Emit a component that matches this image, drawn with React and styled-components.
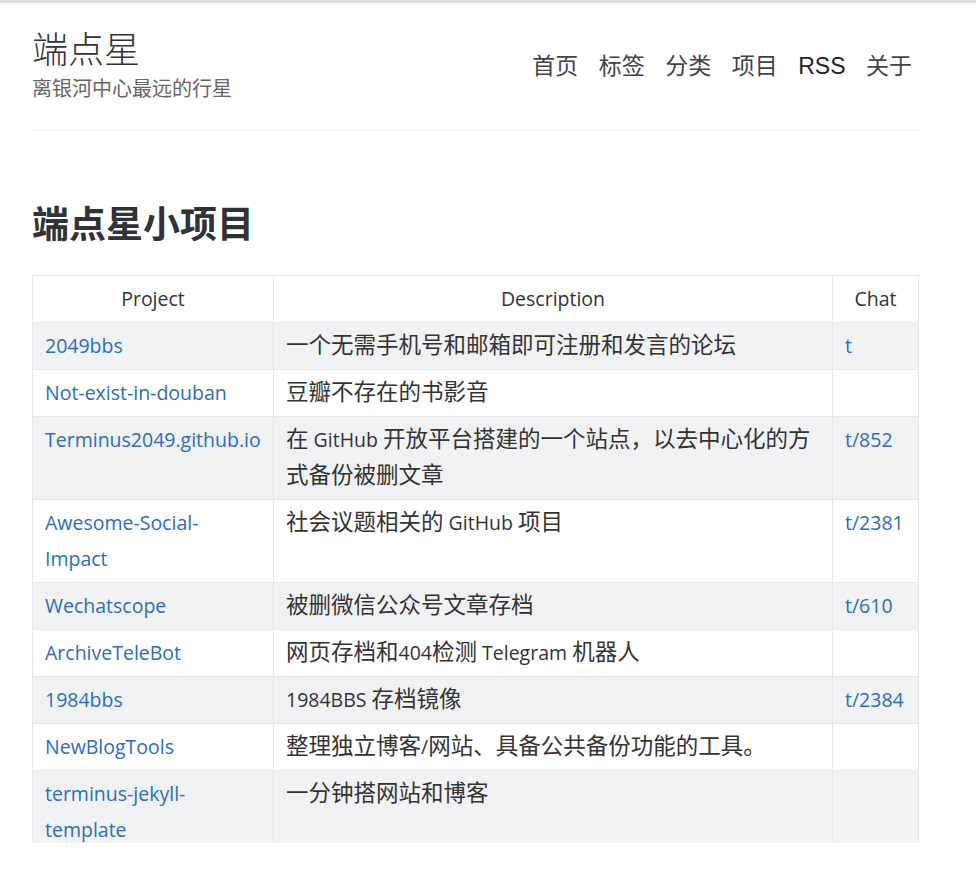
import React from "react";
import styled, { createGlobalStyle } from "styled-components";

const GlobalStyle = createGlobalStyle`
  html, body {
    margin: 0;
    padding: 0;
    background: #fff;
  }
  body {
    font-family: "Open Sans", "Noto Sans CJK SC", sans-serif;
    color: #333;
  }
`;

const Page = styled.div`
  border-top: 3px solid #dedee3;
  height: 840px;
  overflow: hidden;
`;

const Container = styled.div`
  width: 886px;
  margin-left: 32px;
`;

const Header = styled.header`
  display: flex;
  justify-content: space-between;
  align-items: center;
  padding: 22px 0 27px;
  border-bottom: 1px solid #eeeeee;
`;

const Brand = styled.div`
  display: flex;
  flex-direction: column;
`;

const SiteTitle = styled.a`
  font-family: "Noto Sans CJK SC", sans-serif;
  font-size: 36px;
  font-weight: 300;
  line-height: 44px;
  color: #333;
  text-decoration: none;
`;

const SiteTagline = styled.div`
  font-family: "Noto Sans CJK SC", sans-serif;
  font-size: 20px;
  line-height: 30px;
  margin-top: 4px;
  color: #666;
`;

const Nav = styled.nav`
  display: flex;
  align-items: baseline;
  gap: 20.5px;
  margin: 4px 6px 0 0;
`;

const NavLink = styled.a`
  font-family: "Liberation Sans", "Noto Sans CJK SC", sans-serif;
  font-size: 23px;
  line-height: 32px;
  color: ${(p) => (p.$latin ? "#222" : "#444")};
  text-decoration: none;
`;

const Title = styled.h1`
  font-family: "Noto Sans CJK SC", sans-serif;
  font-size: 37px;
  font-weight: 700;
  color: #2f3237;
  margin: 66px 0 28px;
  line-height: 50px;
`;

const Table = styled.table`
  width: 100%;
  border-collapse: collapse;
  table-layout: fixed;
  font-family: "Open Sans", "Noto Sans CJK SC", sans-serif;
  font-size: 19.5px;
  line-height: 36px;
`;

const Col = styled.col`
  width: ${(p) => p.$w}px;
`;

const Th = styled.th`
  font-weight: 400;
  text-align: center;
  padding: 5px 12px;
  border: 1px solid #e5e7ea;
`;

const Row = styled.tr`
  background: ${(p) => (p.$striped ? "#f1f2f4" : "#fff")};
`;

const Td = styled.td`
  padding: 5px 11px 5px 12px;
  border: 1px solid #e5e7ea;
  vertical-align: top;
  word-wrap: break-word;
`;

const Han = styled.span`
  font-family: "Noto Sans CJK SC", sans-serif;
  font-size: 22.5px;
  line-height: 20px;
`;

const Link = styled.a`
  color: #2b6cc4;
  text-decoration: none;
`;

// CJK runs are set a bit larger than the latin text, as in the original page
function Mixed({ text }) {
  const parts = text.split(/([\u3000-\u9fff\uff00-\uffef]+)/).filter(Boolean);
  return parts.map((part, i) =>
    /[\u3000-\u9fff\uff00-\uffef]/.test(part) ? (
      <Han key={i}>{part}</Han>
    ) : (
      <React.Fragment key={i}>{part}</React.Fragment>
    )
  );
}

const projects = [
  { name: ["2049bbs"], desc: "一个无需手机号和邮箱即可注册和发言的论坛", chat: "t" },
  { name: ["Not-exist-in-douban"], desc: "豆瓣不存在的书影音", chat: "" },
  {
    name: ["Terminus2049.github.io"],
    desc: "在 GitHub 开放平台搭建的一个站点，以去中心化的方式备份被删文章",
    chat: "t/852",
  },
  { name: ["Awesome-Social-", "Impact"], desc: "社会议题相关的 GitHub 项目", chat: "t/2381" },
  { name: ["Wechatscope"], desc: "被删微信公众号文章存档", chat: "t/610" },
  { name: ["ArchiveTeleBot"], desc: "网页存档和404检测 Telegram 机器人", chat: "" },
  { name: ["1984bbs"], desc: "1984BBS 存档镜像", chat: "t/2384" },
  { name: ["NewBlogTools"], desc: "整理独立博客/网站、具备公共备份功能的工具。", chat: "" },
  { name: ["terminus-jekyll-", "template"], desc: "一分钟搭网站和博客", chat: "" },
];

const navItems = ["首页", "标签", "分类", "项目", "RSS", "关于"];

export default function App() {
  return (
    <>
      <GlobalStyle />
      <Page>
        <Container>
          <Header>
            <Brand>
              <SiteTitle href="#">端点星</SiteTitle>
              <SiteTagline>离银河中心最远的行星</SiteTagline>
            </Brand>
            <Nav>
              {navItems.map((item) => (
                <NavLink key={item} href="#" $latin={item === "RSS"}>
                  {item}
                </NavLink>
              ))}
            </Nav>
          </Header>
          <Title>端点星小项目</Title>
          <Table>
            <colgroup>
              <Col $w={241} />
              <Col $w={559} />
              <Col $w={86} />
            </colgroup>
            <thead>
              <tr>
                <Th>Project</Th>
                <Th>Description</Th>
                <Th>Chat</Th>
              </tr>
            </thead>
            <tbody>
              {projects.map((p, i) => (
                <Row key={p.name.join("")} $striped={i % 2 === 0}>
                  <Td>
                    <Link href="#">
                      {p.name.map((line, j) => (
                        <React.Fragment key={j}>
                          {j > 0 && <br />}
                          {line}
                        </React.Fragment>
                      ))}
                    </Link>
                  </Td>
                  <Td>
                    <Mixed text={p.desc} />
                  </Td>
                  <Td>{p.chat && <Link href="#">{p.chat}</Link>}</Td>
                </Row>
              ))}
            </tbody>
          </Table>
        </Container>
      </Page>
    </>
  );
}
